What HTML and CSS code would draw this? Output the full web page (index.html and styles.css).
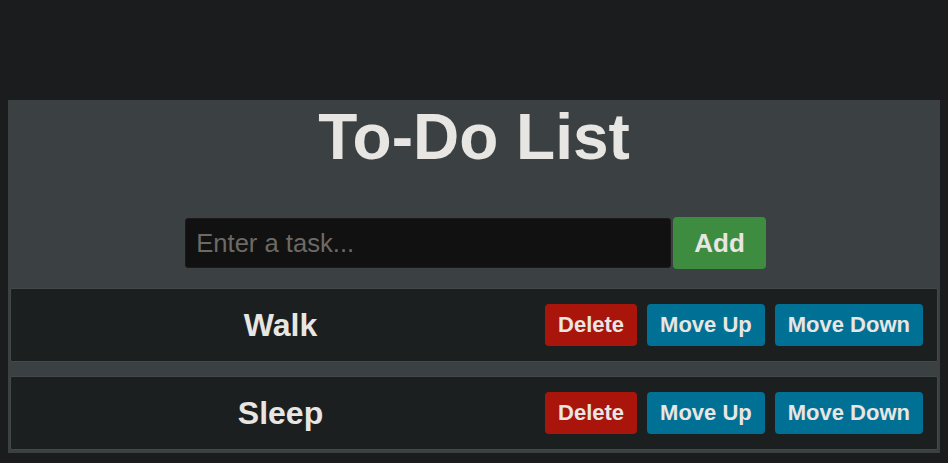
FILE: index.html
```html
<!DOCTYPE html>
<html lang="en">
<head>
<meta charset="utf-8">
<title>To-Do List</title>
<link rel="stylesheet" href="styles.css">
</head>
<body>
<div class="app">
  <h1 class="title">To-Do List</h1>
  <div class="entry">
    <input class="task-input" type="text" placeholder="Enter a task...">
    <button class="add-btn">Add</button>
  </div>
  <ul class="tasks">
    <li class="task">
      <span class="task-name">Walk</span>
      <button class="btn btn-delete">Delete</button>
      <button class="btn btn-move">Move Up</button>
      <button class="btn btn-move">Move Down</button>
    </li>
    <li class="task">
      <span class="task-name">Sleep</span>
      <button class="btn btn-delete">Delete</button>
      <button class="btn btn-move">Move Up</button>
      <button class="btn btn-move">Move Down</button>
    </li>
  </ul>
</div>
</body>
</html>
```

FILE: styles.css
```css
html, body {
  background: #1b1c1e;
}
body {
  margin: 0;
  padding: 100px 8px 0;
  font-family: "Liberation Sans", Arial, sans-serif;
  color: #e8e6e3;
}
.app {
  background: #3b4043;
  padding: 0 2px 3px;
}
.title {
  margin: 0 0 43px;
  font-size: 64px;
  font-weight: bold;
  text-align: center;
  line-height: 74px;
  color: #e8e6e3;
}
.entry {
  display: flex;
  justify-content: center;
  align-items: center;
  gap: 2px;
  margin-bottom: 19px;
  padding-left: 3px;
}
.task-input {
  width: 486px;
  height: 50px;
  box-sizing: border-box;
  padding: 0 10px;
  background: #111111;
  border: 1px solid #1a1a1a;
  border-radius: 3px;
  color: #e8e6e3;
  font-family: "Liberation Sans", Arial, sans-serif;
  font-size: 25.6px;
  outline: none;
}
.task-input::placeholder {
  color: #6d6a66;
}
.add-btn {
  height: 52px;
  padding: 0 21px;
  background: #3d8c40;
  border: none;
  border-radius: 4px;
  color: #e8e6e3;
  font-family: "Liberation Sans", Arial, sans-serif;
  font-size: 26px;
  font-weight: bold;
}
.tasks {
  list-style: none;
  margin: 0;
  padding: 0;
  display: flex;
  flex-direction: column;
  gap: 14px;
}
.task {
  display: flex;
  align-items: center;
  padding: 10px 9px 10px 10px;
  background: #1c1f20;
  border: 1px solid #43484b;
  border-radius: 2px;
}
.task-name {
  flex: 1;
  text-align: center;
  font-size: 32px;
  font-weight: bold;
}
.btn {
  margin: 5px;
  height: 42px;
  padding: 0 13px;
  border: none;
  border-radius: 4px;
  color: #e8e6e3;
  font-family: "Liberation Sans", Arial, sans-serif;
  font-size: 22px;
  font-weight: bold;
}
.btn-delete {
  background: #a9150b;
}
.btn-move {
  background: #007095;
}
```
